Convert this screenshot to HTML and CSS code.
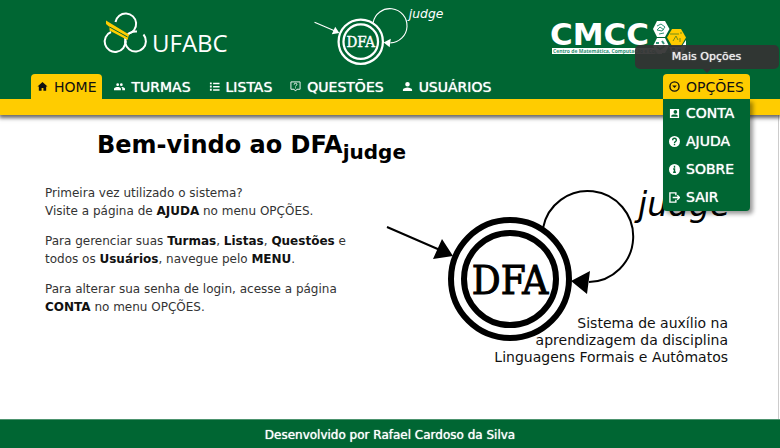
FILE: index.html
```html
<!DOCTYPE html>
<html lang="pt-BR">
<head>
<meta charset="utf-8">
<title>DFAjudge</title>
<link rel="stylesheet" href="styles.css">
</head>
<body>
<header class="header">
  <div class="logos">
    <svg class="logo" width="145" height="74" viewBox="104 0 145 74" role="img" aria-label="UFABC">
      <g fill="none" stroke="#fff" stroke-width="2">
        <path d="M115.500 22A10.400 10.400 0 1 1 128 34"/>
        <path d="M111 32A10.400 10.400 0 1 0 125.500 41"/>
        <path d="M137 31.500Q130 31 126.500 36A10.400 10.400 0 1 0 143.500 34.500"/>
        <path d="M125.500 38V43"/>
      </g>
      <path d="M106 20.500L129 34.500L127.500 40L109.500 30.500V27L106 24Z" fill="#fc0"/>
      <path d="M109.500 27L127.500 37" stroke="#006633" stroke-width="1"/>
      <text class="ufabc" x="152" y="52">UFABC</text>
    </svg>
    <svg class="logo logo-dfa" width="168" height="74" viewBox="391 168 447 197" role="img" aria-label="DFA judge"><use href="#dfa"/></svg>
    <svg class="logo" width="140" height="74" viewBox="551 0 140 74" role="img" aria-label="CMCC">
      <text class="cmcc" x="550" y="45">CMCC</text>
      <path d="M552 48H662V54H552Z" fill="#fff"/>
      <text class="cmcc-sub" x="553" y="53">Centro de Matemática, Computação e Cognição</text>
      <path d="M657 21H665L669.500 29L665 37H657L653 29Z" fill="#fff"/>
      <path d="M657 38H665L669 46L665 53H657L653 46Z" fill="#fff"/>
      <path d="M672 29H681L686 37.500L681 46H672L667 37.500Z" fill="#fc0"/>
      <path d="M682 46L686 40V47L683 53H672L669 47H681Z" fill="#fff"/>
      <g fill="none" stroke="#2f9275">
        <path d="M657 26L661 24L665 27L662 31L657 30L660 27L664 30M659 34L664 33"/>
        <path d="M656 43H659M662 41L664 44M657 47L660 49L665 46M672 49H675M678 50H681" stroke-width="2"/>
      </g>
      <path d="M670 34H679M681 32V34M673 41L676 36L678 40M680 38V42" fill="none" stroke="#718d18"/>
    </svg>
  </div>
  <nav class="nav">
    <a class="tab active" href="#"><svg class="ico" viewBox="0 0 24 24"><path d="M10 21v-6h4v6h6v-9h3L12 2 1 12h3v9z"/></svg>HOME</a>
    <a class="tab" href="#"><svg class="ico" viewBox="0 0 24 24"><path d="M16 11a3 3 0 1 0 0-6 3 3 0 0 0 0 6zM8 11a3 3 0 1 0 0-6 3 3 0 0 0 0 6zM8 13c-3 0-8 1-8 4v3h15v-3c0-3-4-4-7-4zM16 13h-1c2 1 3 2 3 4v3h6v-3c0-3-5-4-8-4z"/></svg>TURMAS</a>
    <a class="tab" href="#"><svg class="ico" viewBox="0 0 24 24"><path d="M2 3h4v4H2zM2 10h4v4H2zM2 17h4v4H2zM9 4h14v3H9zM9 11h14v3H9zM9 18h14v3H9z"/></svg>LISTAS</a>
    <a class="tab" href="#"><svg class="ico" viewBox="0 0 24 24"><path d="M2 2h20v16h-7l-3 4-3-4H2zM9 8q0-3 3-3t3 3c0 2-3 2-3 4M12 14v2" fill="none" stroke="currentColor" stroke-width="2"/></svg>QUESTÕES</a>
    <a class="tab" href="#"><svg class="ico" viewBox="0 0 24 24"><path d="M12 12a5 5 0 1 0 0-10 5 5 0 0 0 0 10zM12 14c-4 0-10 2-10 5v3h20v-3c0-3-6-5-10-5z"/></svg>USUÁRIOS</a>
    <div class="options">
      <button class="tab active" type="button" aria-describedby="tip"><svg class="ico" viewBox="0 0 24 24"><circle cx="12" cy="12" r="10" fill="none" stroke="currentColor" stroke-width="3"/><path d="M7 10h10l-5 5z"/></svg>OPÇÕES</button>
      <div class="tooltip" id="tip" role="tooltip">Mais Opções</div>
      <div class="menu">
        <a class="item" href="#"><svg class="ico" viewBox="0 0 24 24"><path fill-rule="evenodd" d="M2 2h20v20H2zM12 12a4 4 0 1 0 0-7 4 4 0 0 0 0 7zM5 19h14v-2c0-2-4-3-7-3s-7 1-7 3z"/></svg>CONTA</a>
        <a class="item" href="#"><svg class="ico" viewBox="0 0 24 24"><circle cx="12" cy="12" r="12"/><path d="M8 9q0-4 4-4t4 4c0 3-4 3-4 6M12 17v3" fill="none" stroke="#006633" stroke-width="3"/></svg>AJUDA</a>
        <a class="item" href="#"><svg class="ico" viewBox="0 0 24 24"><circle cx="12" cy="12" r="12"/><path d="M12 4v4M9 11h3v8M9 18h6" fill="none" stroke="#006633" stroke-width="3"/></svg>SOBRE</a>
        <a class="item" href="#"><svg class="ico" viewBox="0 0 24 24"><path d="M15 7V2H2v20h13v-5M8 12h14M18 7l5 5-5 5" fill="none" stroke="currentColor" stroke-width="3"/></svg>SAIR</a>
      </div>
    </div>
  </nav>
</header>
<main class="main">
  <h1 class="title">Bem-vindo ao DFA<sub>judge</sub></h1>
  <div class="intro">
    <p>Primeira vez utilizado o sistema?<br>Visite a página de <b>AJUDA</b> no menu OPÇÕES.</p>
    <p>Para gerenciar suas <b>Turmas</b>, <b>Listas</b>, <b>Questões</b> e todos os <b>Usuários</b>, navegue pelo <b>MENU</b>.</p>
    <p>Para alterar sua senha de login, acesse a página <b>CONTA</b> no menu OPÇÕES.</p>
  </div>
  <figure class="figure">
    <svg class="diagram" width="341" height="160" viewBox="387 184 341 160" role="img" aria-label="DFA judge">
      <defs>
        <g id="dfa">
          <g fill="none" stroke="currentColor">
            <circle cx="510" cy="279" r="59" stroke-width="6"/>
            <circle cx="510" cy="279" r="46" stroke-width="6"/>
            <path class="thin" d="M543 228A45.500 45.500 0 1 1 589 282M387 227L440 250"/>
          </g>
          <path fill="currentColor" d="M571 281L590 271L587 294ZM453 256L442 239L433 259Z"/>
          <text class="dfa-name" x="510" y="294">DFA</text>
          <text class="dfa-judge" x="638" y="216">judge</text>
        </g>
      </defs>
      <use href="#dfa"/>
    </svg>
    <figcaption class="caption">Sistema de auxílio na<br>aprendizagem da disciplina<br>Linguagens Formais e Autômatos</figcaption>
  </figure>
</main>
<footer class="footer">Desenvolvido por Rafael Cardoso da Silva</footer>
</body>
</html>
```
FILE: styles.css
```css
* { box-sizing: border-box; }
body {
  margin: 0;
  min-height: 100vh;
  display: flex;
  flex-direction: column;
  background: #fff;
  color: #333;
  font: 12px/18px "DejaVu Sans", Verdana, sans-serif;
}
.header {
  position: relative;
  z-index: 1;
  background: #006633;
  border-bottom: 16px solid #fc0;
  box-shadow: 0 2px 4px 1px rgba(0, 0, 0, .6);
}
.logos {
  display: flex;
  gap: 67px;
  height: 74px;
  padding-left: 104px;
}
.logo { display: block; flex: none; overflow: visible; }
.ufabc { font: 24px "Open Sans", sans-serif; fill: #fff; }
.cmcc { font: bold 31px "DejaVu Sans", sans-serif; fill: #fff; }
.cmcc-sub { font: bold 5px "Open Sans", sans-serif; fill: #2f9275; }
.logo-dfa { color: #fff; --thin: 3px; }
.thin { stroke-width: var(--thin, 2px); }
.dfa-name {
  font: 40px "DejaVu Serif Condensed", "DejaVu Serif", serif;
  text-anchor: middle;
  fill: currentColor;
  stroke: currentColor;
  stroke-width: 1px;
}
.dfa-judge { font: italic 33px "DejaVu Sans", sans-serif; fill: currentColor; }
.nav {
  display: flex;
  gap: 6px;
  padding: 0 30px 0 31px;
}
.tab, .item {
  display: flex;
  align-items: center;
  gap: 6px;
  color: #fff;
  font: 14px "DejaVu Sans", Verdana, sans-serif;
  text-decoration: none;
  text-shadow: 0 0 1px #fff;
}
.tab {
  height: 25px;
  padding: 0 6px;
  border: 0;
  background: none;
}
.tab.active {
  background: #fc0;
  color: #111;
  border-radius: 4px 4px 0 0;
  text-shadow: none;
}
.ico { width: 11px; height: 11px; flex: none; fill: currentColor; }
.options { position: relative; margin-left: auto; }
.menu {
  position: absolute;
  top: 100%;
  left: 0;
  right: 0;
  background: #006633;
  border-radius: 0 0 4px 4px;
  box-shadow: 3px 3px 4px rgba(0, 0, 0, .4);
}
.item { height: 28px; padding: 0 6px; }
.tooltip {
  position: absolute;
  bottom: 30px;
  left: 50%;
  width: 144px;
  margin-left: -72px;
  border-radius: 5px;
  background: rgba(51, 51, 51, .94);
  color: #eee;
  font-size: 11px;
  line-height: 24px;
  text-align: center;
  text-shadow: 0 0 1px #eee;
}
.tooltip::after {
  content: "";
  position: absolute;
  top: 100%;
  left: 50%;
  margin-left: -4px;
  border: 4px solid transparent;
  border-top-color: #333;
}
.main {
  flex: 1;
  display: grid;
  grid-template-columns: 320px auto;
  grid-template-rows: auto 1fr;
  justify-content: space-between;
  margin-right: 1px;
  border-right: 1px solid #ccc;
  padding: 14px 50px 20px 45px;
}
.title {
  grid-column: 1 / -1;
  margin: 0 0 22px 52px;
  color: #000;
  font-size: 24px;
  line-height: 32px;
}
.title sub { font-size: 20px; line-height: 1; vertical-align: sub; }
.intro p { margin: 0 0 12px; }
.intro b { color: #111; }
.figure { margin: 0; color: #000; }
.diagram { display: block; overflow: visible; }
.caption {
  margin-top: -29px;
  color: #111;
  font: 14px/17px "DejaVu Sans", Verdana, sans-serif;
  text-align: right;
}
.footer {
  background: #006633;
  border-top: 1px solid #4d946f;
  color: #fff;
  line-height: 20px;
  padding: 5px 0 3px;
  text-align: center;
  text-shadow: 0 0 1px #fff;
}
```
